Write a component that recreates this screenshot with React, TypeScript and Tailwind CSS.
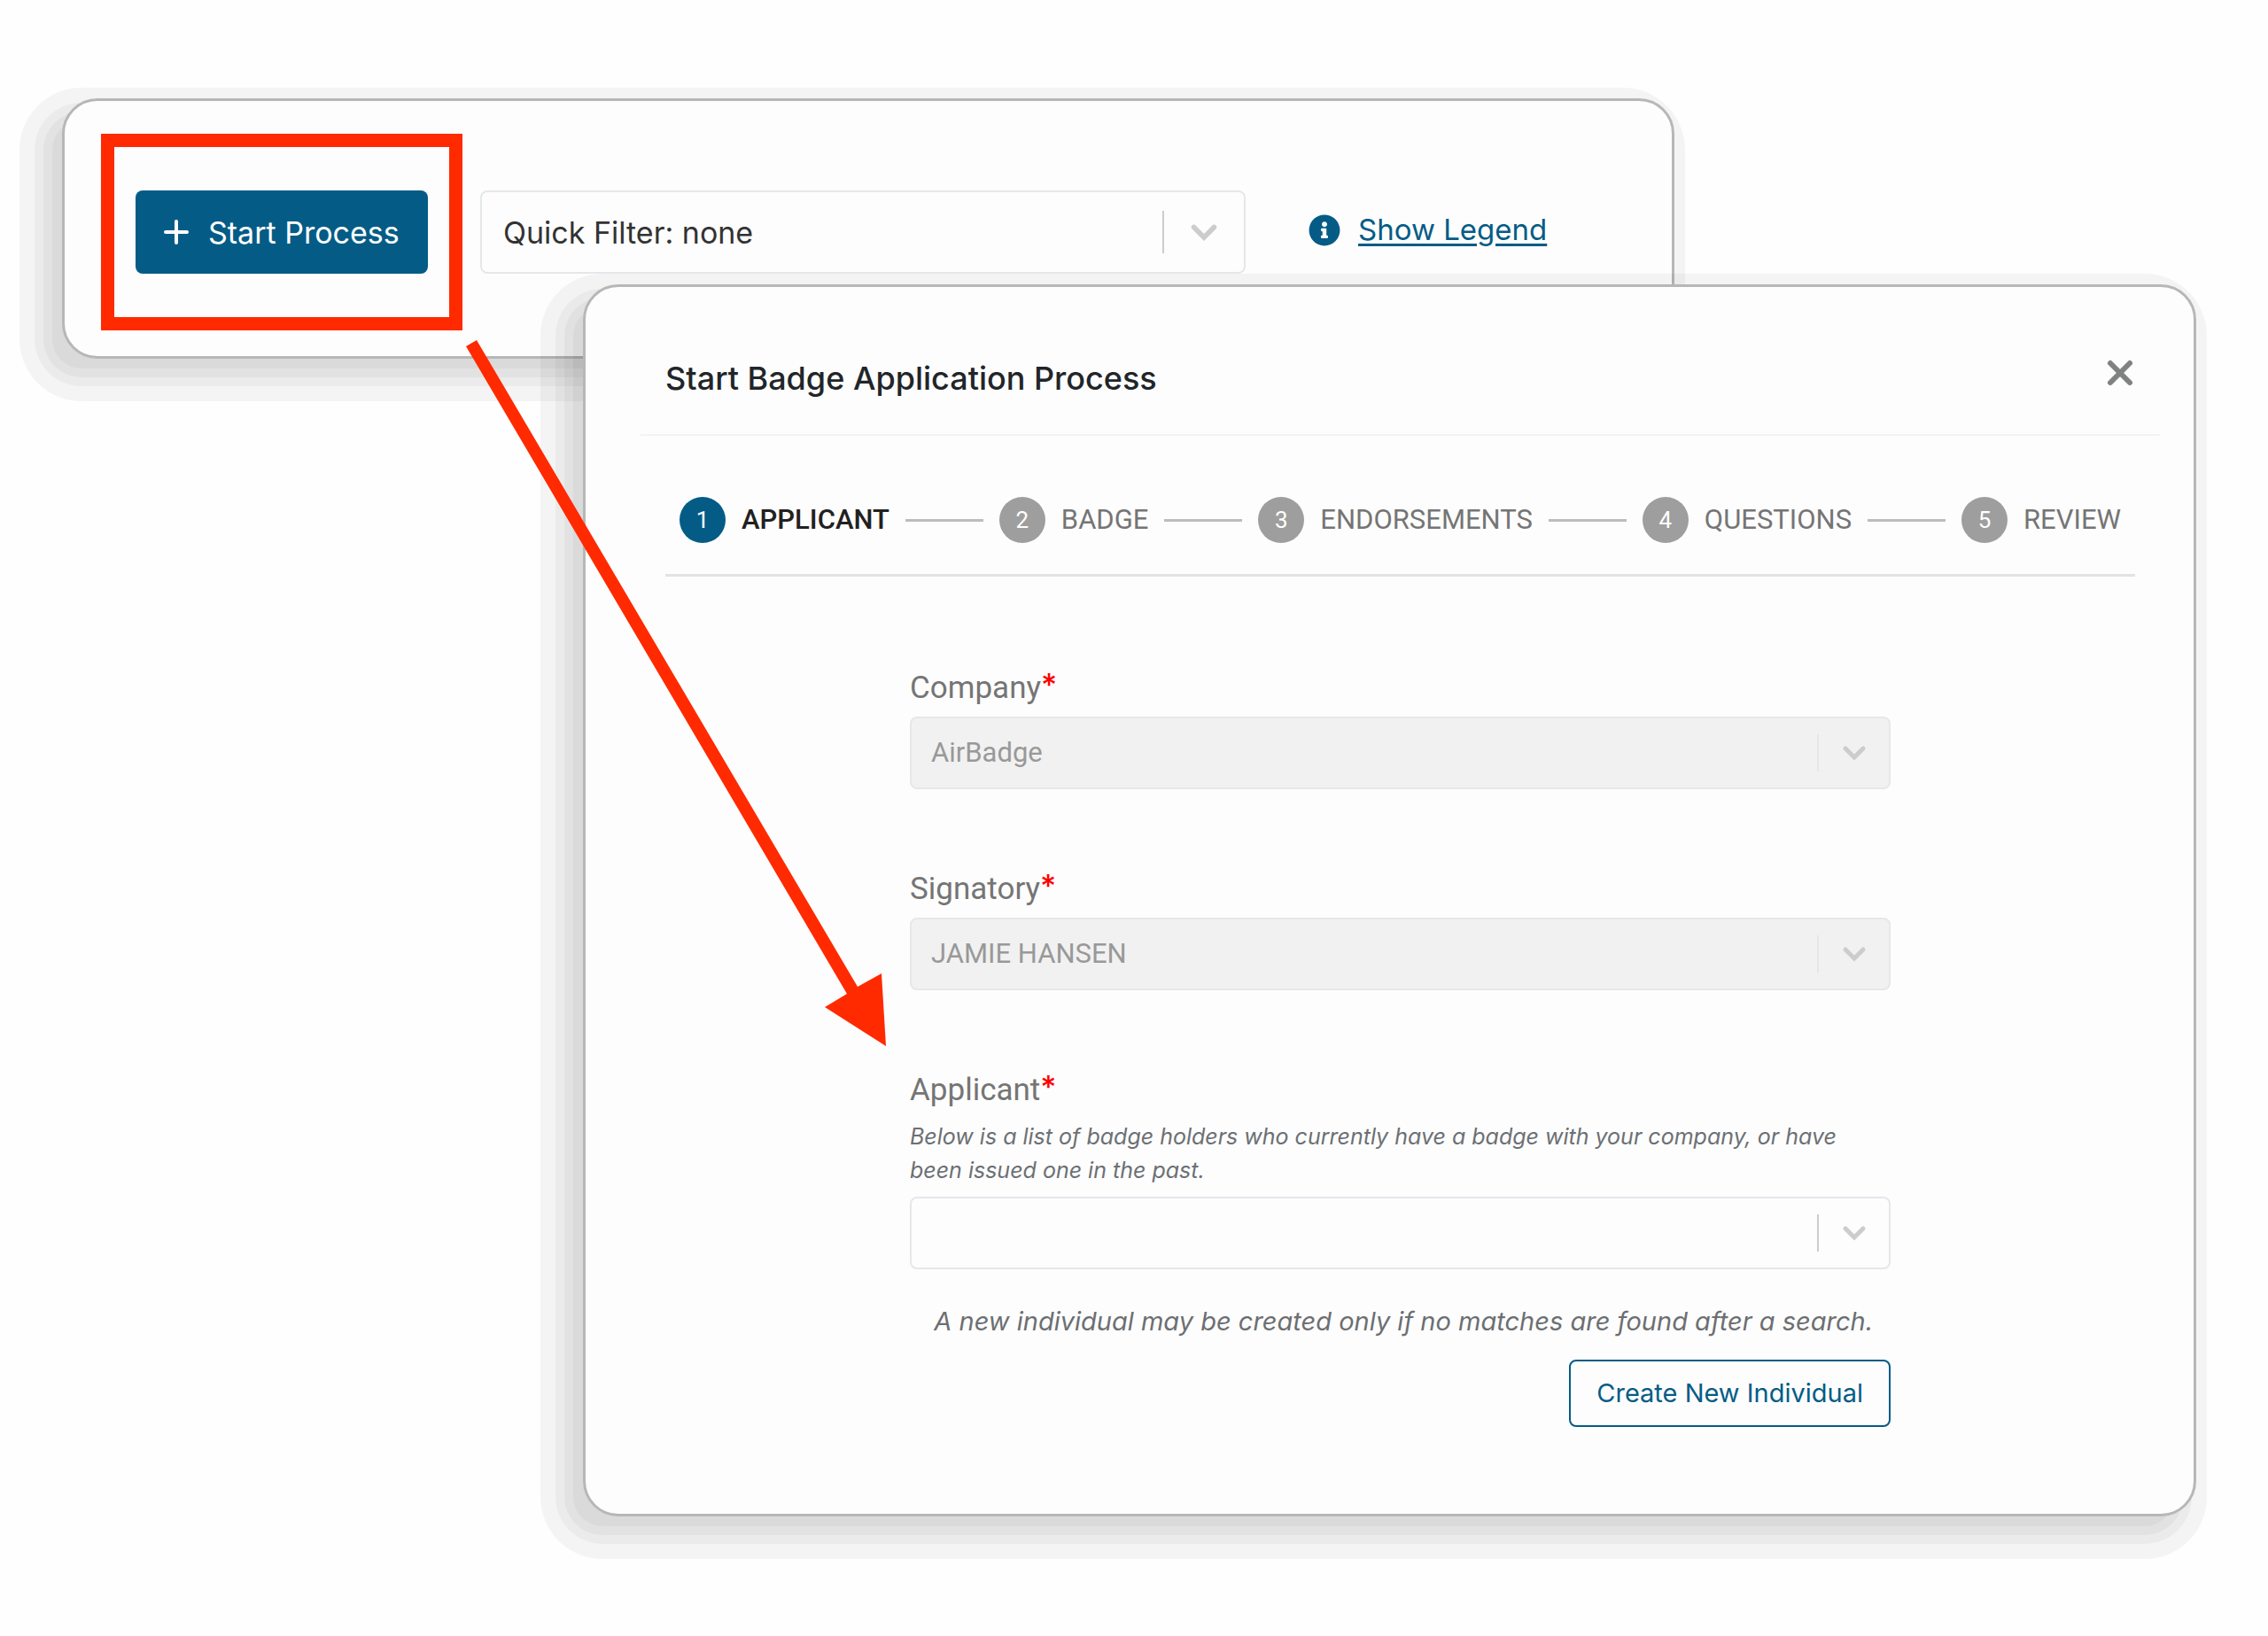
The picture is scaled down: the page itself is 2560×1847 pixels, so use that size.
import { useId } from "react";
import { FaInfoCircle } from "react-icons/fa";

const steps = ["Applicant", "Badge", "Endorsements", "Questions", "Review"];

const panelShadow =
  "shadow-[-18px_18px_0_30px_rgba(0,0,0,0.04),-18px_18px_0_13px_rgba(0,0,0,0.035),-18px_18px_0_3px_rgba(0,0,0,0.035),-18px_18px_0_-7px_rgba(0,0,0,0.035)]";

interface DropdownProps {
  id: string;
  value?: string;
  disabled?: boolean;
  large?: boolean;
  label?: string;
}

function Dropdown({ id, value = "", disabled, large, label }: DropdownProps) {
  const size = large
    ? "h-[94px] pl-6 font-[Inter,sans-serif] text-[34px] text-[#333]"
    : "h-[82px] pl-[22px] text-[31px] text-[#999]";
  const surface = disabled ? "bg-[#f1f1f1]" : "bg-transparent";

  return (
    <div className="relative w-full">
      <select
        id={id}
        aria-label={label}
        defaultValue={value}
        disabled={disabled}
        className={`block w-full appearance-none rounded-lg border-2 border-[#e4e8eb] opacity-100 ${size} ${surface}`}
      >
        <option value={value}>{value}</option>
      </select>
      <div
        className={`pointer-events-none absolute inset-y-0 right-0 flex items-center pr-0.5 ${large ? "w-[94px]" : "w-[83px]"}`}
      >
        <span
          className={`w-[2px] ${large ? "h-12" : "h-[42px]"} ${disabled ? "bg-[#e4e6e7]" : "bg-[#ccc]"}`}
        />
        <svg
          viewBox="0 0 28 18"
          className={`mx-auto ${large ? "w-8" : "w-7"}`}
          fill="none"
          stroke="#ccc"
          strokeWidth="5"
          strokeLinecap="round"
        >
          <path d="M4 4l10 10L24 4" />
        </svg>
      </div>
    </div>
  );
}

function Toolbar() {
  return (
    <section
      className={`flex h-[294px] items-center rounded-[40px] border-[3px] border-[#b7b7b7] bg-[#fdfdfd] pt-2 pl-[41px] font-[Inter,sans-serif] text-[34px] ${panelShadow}`}
    >
      <div className="shrink-0 border-[15px] border-[#ff2a00] px-6 py-[49px]">
        <button className="flex h-[94px] w-[330px] items-center rounded-lg bg-[#045c86] pl-8 text-white">
          <svg viewBox="0 0 28 28" className="mr-[22px] w-7" stroke="white" strokeWidth="4" strokeLinecap="round">
            <path d="M14 2v24M2 14h24" />
          </svg>
          Start Process
        </button>
      </div>
      <div className="ml-5 w-[864px]">
        <Dropdown id="quick-filter" label="Quick Filter" value="Quick Filter: none" large />
      </div>
      <a href="#legend" className="ml-[71px] flex items-center gap-5 pb-1 text-[33px] text-[#045c86]">
        <FaInfoCircle className="size-9" />
        <span className="underline decoration-[3px] underline-offset-4">Show Legend</span>
      </a>
    </section>
  );
}

function Stepper() {
  return (
    <ol className="flex items-center gap-[18px] border-b-[3px] border-[#e1e4e5] px-4 pt-[69px] pb-[35px] text-[31px] uppercase">
      {steps.map((step, i) => (
        <li key={step} className={`flex items-center gap-[18px] ${i > 0 ? "flex-auto" : ""}`}>
          {i > 0 && <span className="h-[3px] flex-1 bg-[#bdbdbd]" />}
          <span
            className={`flex size-[52px] items-center justify-center rounded-full text-[26px] text-white ${i === 0 ? "bg-[#045c86]" : "bg-[#9e9e9e]"}`}
          >
            {i + 1}
          </span>
          <span className={i === 0 ? "font-medium text-[#212121]" : "text-[#757575]"}>{step}</span>
        </li>
      ))}
    </ol>
  );
}

interface FieldProps {
  label: string;
  value?: string;
  disabled?: boolean;
  hint?: string;
}

function Field({ label, value, disabled, hint }: FieldProps) {
  const id = useId();
  return (
    <div>
      <label htmlFor={id} className="flex items-start text-[35px] leading-[42px] text-[#757575]">
        {label}
        <span className="font-[Inter,sans-serif] leading-[34px] font-medium text-[#f00]">*</span>
      </label>
      {hint && (
        <p className="mt-3 font-[Inter,sans-serif] text-[25px] leading-[38px] text-[#6c7074] italic">{hint}</p>
      )}
      <div className="mt-[11px]">
        <Dropdown id={id} value={value} disabled={disabled} />
      </div>
    </div>
  );
}

function ProcessDialog() {
  return (
    <section
      role="dialog"
      aria-labelledby="dialog-title"
      className={`rounded-[40px] border-[3px] border-[#b7b7b7] bg-[#fdfdfd] pr-[38px] pb-[98px] pl-[62px] ${panelShadow}`}
    >
      <header className="flex h-[168px] items-start justify-between border-b-2 border-[#f3f3f3] pt-[76px] pr-6 pl-7">
        <h2 id="dialog-title" className="font-[Inter,sans-serif] text-[36px] leading-[54px] font-medium text-[#212529]">
          Start Badge Application Process
        </h2>
        <button aria-label="Close" className="p-[5px]">
          <svg viewBox="0 0 32 32" className="w-8" stroke="#7f8281" strokeWidth="6" strokeLinecap="round">
            <path d="M5 5l22 22M27 5L5 27" />
          </svg>
        </button>
      </header>
      <div className="px-7">
        <Stepper />
        <form className="mx-auto flex w-[1107px] flex-col gap-[92px] pt-[105px]">
          <Field label="Company" value="AirBadge" disabled />
          <Field label="Signatory" value="JAMIE HANSEN" disabled />
          <div>
            <Field
              label="Applicant"
              hint="Below is a list of badge holders who currently have a badge with your company, or have been issued one in the past."
            />
            <p className="mt-9 pr-5 text-right font-[Inter,sans-serif] text-[29px] leading-[46px] text-[#6c6f72] italic">
              A new individual may be created only if no matches are found after a search.
            </p>
            <div className="mt-5 flex justify-end">
              <button
                type="button"
                className="h-[76px] rounded-lg border-2 border-[#045c86] px-[29px] font-[Inter,sans-serif] text-[29px] text-[#045c86]"
              >
                Create New Individual
              </button>
            </div>
          </div>
        </form>
      </div>
    </section>
  );
}

export default function App() {
  return (
    <main className="relative min-h-screen bg-[#fefefe] pt-[111px] pr-[81px] pb-[130px] pl-[70px] font-[Roboto,sans-serif]">
      <div className="mr-[589px]">
        <Toolbar />
      </div>
      <div className="relative -mt-[84px] ml-[588px]">
        <ProcessDialog />
      </div>
      <svg
        className="pointer-events-none absolute top-[380px] left-[510px] h-[804px] w-[500px]"
        viewBox="0 0 500 804"
        fill="#ff2a00"
      >
        <path d="M16 11L28 4L458 734L485 719L490 801L421 757L446 742Z" />
      </svg>
    </main>
  );
}
